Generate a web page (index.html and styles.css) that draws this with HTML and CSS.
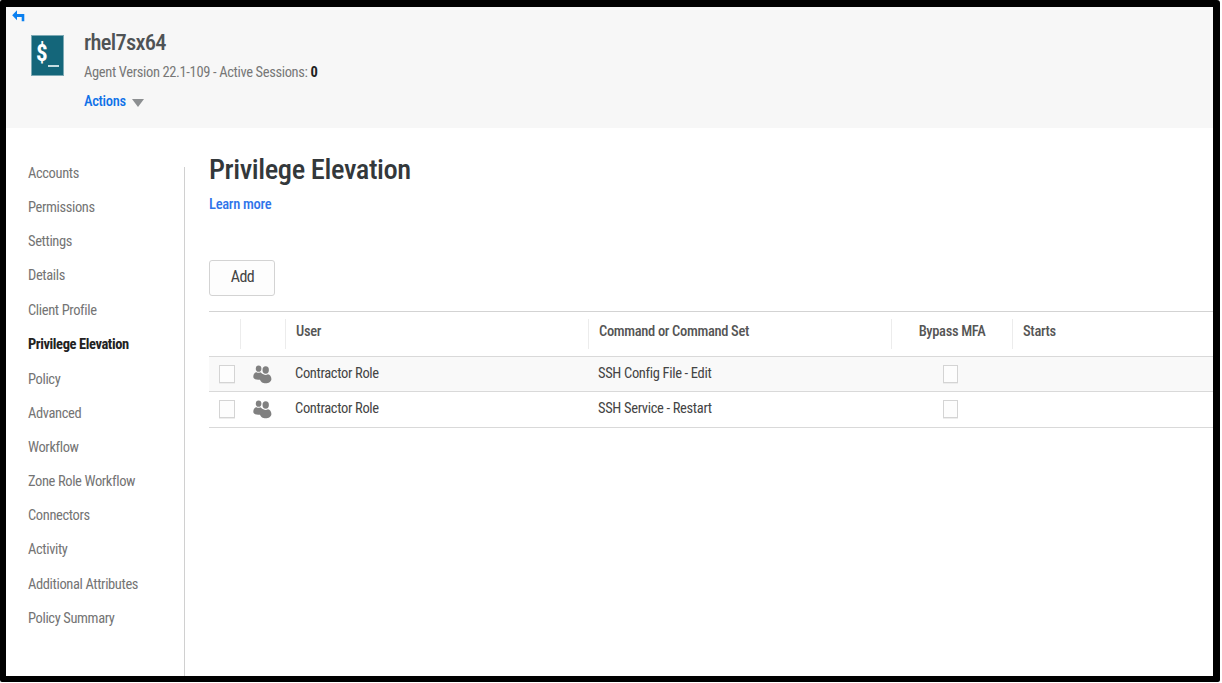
FILE: index.html
```
<!DOCTYPE html>
<html lang="en">
<head>
<meta charset="utf-8">
<title>rhel7sx64 - Privilege Elevation</title>
<link rel="stylesheet" href="styles.css">
</head>
<body>
<div class="window">
  <header class="header">
    <a class="back" aria-label="Back"><svg width="14" height="12" viewBox="0 0 14 12"><path d="M5 .2.2 5.200 5 10.200V7h4.700v4.200h2.600V4H5z" fill="#0a80f0"/></svg></a>
    <div class="system-icon"><span class="dollar">$</span><span class="cursor"></span></div>
    <div class="summary">
      <h2 class="name">rhel7sx64</h2>
      <p class="meta">Agent Version 22.1-109 - Active Sessions: <b>0</b></p>
      <a class="actions">Actions<span class="caret"></span></a>
    </div>
  </header>
  <div class="body">
    <nav class="nav">
      <a>Accounts</a>
      <a>Permissions</a>
      <a>Settings</a>
      <a>Details</a>
      <a>Client Profile</a>
      <a class="current">Privilege Elevation</a>
      <a>Policy</a>
      <a>Advanced</a>
      <a>Workflow</a>
      <a>Zone Role Workflow</a>
      <a>Connectors</a>
      <a>Activity</a>
      <a>Additional Attributes</a>
      <a>Policy Summary</a>
    </nav>
    <main class="main">
      <h1 class="title">Privilege Elevation</h1>
      <a class="learn">Learn more</a>
      <button class="add">Add</button>
      <div class="table">
        <div class="row head">
          <div></div><div></div><div>User</div><div>Command or Command Set</div><div class="center">Bypass MFA</div><div>Starts</div>
        </div>
        <div class="row odd">
          <div><span class="check"></span></div>
          <div><svg class="people" width="19" height="19" viewBox="0 0 19 19"><g fill="#808080"><ellipse cx="5.600" cy="3.700" rx="2.800" ry="3.100"/><path d="M.3 11.800C.3 8.900 2 7.200 3.500 7.200c1.200.8 2.600.8 3.800 0l3 2.300-2 5.200C4.500 14.800.3 14.600.3 11.800z"/><ellipse cx="12.700" cy="5" rx="3.200" ry="3.700"/><path d="M7 14c0-3.200 1.800-4.800 3.300-4.800 1.500.9 3.200.9 4.700 0 1.800.2 3.400 2 3.400 4.800 0 5.700-11.400 5.700-11.400 0z"/></g></svg></div>
          <div>Contractor Role</div><div>SSH Config File - Edit</div><div class="center"><span class="check"></span></div><div></div>
        </div>
        <div class="row last">
          <div><span class="check"></span></div>
          <div><svg class="people" width="19" height="19" viewBox="0 0 19 19"><g fill="#808080"><ellipse cx="5.600" cy="3.700" rx="2.800" ry="3.100"/><path d="M.3 11.800C.3 8.900 2 7.200 3.500 7.200c1.200.8 2.600.8 3.800 0l3 2.300-2 5.200C4.500 14.800.3 14.600.3 11.800z"/><ellipse cx="12.700" cy="5" rx="3.200" ry="3.700"/><path d="M7 14c0-3.200 1.800-4.800 3.300-4.800 1.500.9 3.200.9 4.700 0 1.800.2 3.400 2 3.400 4.800 0 5.700-11.400 5.700-11.400 0z"/></g></svg></div>
          <div>Contractor Role</div><div>SSH Service - Restart</div><div class="center"><span class="check"></span></div><div></div>
        </div>
      </div>
    </main>
  </div>
</div>
</body>
</html>
```
FILE: styles.css
```
* { box-sizing: border-box; }
body {
  margin: 0;
  background: #fff;
  font: 14.5px/20px "Roboto Condensed", Roboto, sans-serif;
  letter-spacing: -0.34px;
  color: #444;
}
h1, h2, p { margin: 0; }
.window {
  width: 1220px;
  height: 682px;
  border: solid #000;
  border-width: 7px 7px 6px 6px;
  border-radius: 2px 3px 2px 2px;
  overflow: hidden;
  display: flex;
  flex-direction: column;
}
.header {
  display: flex;
  flex: none;
  height: 121px;
  background: #f7f7f7;
}
.back { width: 25px; padding: 3px 0 0 6px; line-height: 0; }
.system-icon {
  display: flex;
  width: 33px;
  height: 41px;
  margin-top: 28px;
  padding: 0 0 0 5px;
  border: 1px solid #7ca9b4;
  background: #14667a;
  color: #fff;
}
.dollar { width: 12px; font: 700 23px/36px "Roboto Condensed", Roboto, sans-serif; letter-spacing: 0; margin-left: -1px; margin-right: 1px; }
.cursor { width: 11px; height: 2px; margin-top: 29px; margin-left: -1px; background: #c5dce1; }
.summary { padding: 23px 0 0 20px; }
.name { font-size: 22.5px; line-height: 24px; font-weight: 500; letter-spacing: -.72px; color: #4f5355; }
.meta { margin-top: 9px; letter-spacing: -.36px; color: #777; font-variant-numeric: slashed-zero; }
.meta b { color: #222; }
.actions { display: flex; align-items: center; margin-top: 9px; color: #0f71e8; font-weight: 500; }
.caret { margin: 2px 0 0 6px; border: 6px solid transparent; border-top: 8px solid #8c8f91; border-bottom: 0; }
.body { display: flex; flex: 1; min-height: 0; padding: 39px 0 0 22px; }
.nav {
  display: flex;
  flex-direction: column;
  width: 157px;
  border-right: 1px solid #d0d0d0;
}
.nav a { height: 34.15px; line-height: 14px; letter-spacing: -.38px; color: #747474; }
.nav .current { height: 35px; color: #222; font-weight: 700; letter-spacing: -.4px; }
.main { flex: 1; min-width: 0; padding-left: 24px; display: flex; flex-direction: column; align-items: flex-start; }
.title { margin-top: -13px; font-size: 28.5px; line-height: 32px; font-weight: 500; letter-spacing: -.42px; color: #33383b; }
.learn { margin-top: 9px; letter-spacing: -.28px; color: #2f74ea; font-weight: 500; }
.add {
  width: 66px;
  height: 36px;
  margin-top: 45px;
  padding: 0 0 4px 1px;
  border: 1px solid #d3d3d3;
  border-radius: 3px;
  background: #fdfdfd;
  color: #444;
  font: 16px "Roboto Condensed", Roboto, sans-serif;
  letter-spacing: -.5px;
}
.table { width: 100%; margin-top: 15px; border-top: 1px solid #d3d3d3; }
.row {
  display: grid;
  grid-template-columns: 32px 45px 303px 303px 121px 1fr;
  align-items: center;
  height: 35px;
  border-bottom: 1px solid #d9d9d9;
}
.row > div { padding-left: 9px; }
.row > div:first-child { padding-left: 10px; }
.row > .center { padding: 0 5px 0 0; text-align: center; }
.row > div:nth-child(2) { padding-left: 12px; }
.odd { background: #f9f9f9; }
.last { height: 36px; padding-bottom: 2px; }
.head { height: 45px; font-weight: 500; color: #555; }
.row.head > div { height: 30px; padding-left: 10px; line-height: 25px; border-right: 1px solid #ececec; }
.row.head > .center { padding: 0; }
.row.head > div:last-child { border: 0; }
.check {
  display: block;
  width: 16px;
  height: 18px;
  border: 1px solid #d4d4d4;
  background: #fdfdfd;
  box-shadow: 0 1px 0 #ededed;
}
.center .check { width: 15px; margin: 0 auto; }
.people { display: block; margin-top: 1px; }
```
